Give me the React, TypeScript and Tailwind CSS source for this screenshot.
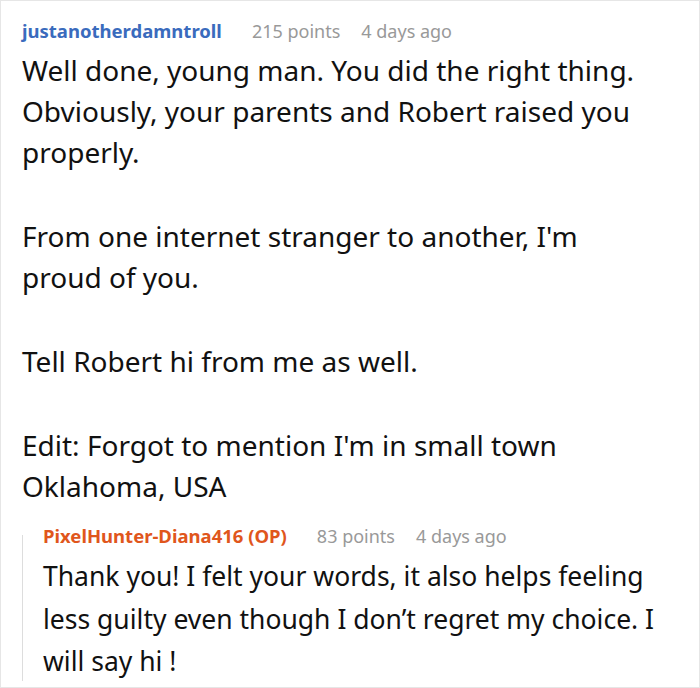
import React from "react"

const font = { fontFamily: '"Noto Sans", "Open Sans", sans-serif' }

const App = () => {
  return (
    <div className="w-[700px] h-[688px] bg-white border border-[#e6e6e6] overflow-hidden" style={font}>
      <div className="pl-[21px] pr-[40px] pt-[17px]">
        <div className="flex items-baseline text-[18px] leading-[26px]">
          <span className="font-bold text-[18.5px] text-[#3a6bbd]">justanotherdamntroll</span>
          <span className="ml-[30px] text-[#999]">215 points</span>
          <span className="ml-[21px] text-[#999]">4 days ago</span>
        </div>
        <div className="text-[28px] leading-[41px] text-[#111] mt-[6px]">
          <p>Well done, young man. You did the right thing. Obviously, your parents and Robert raised you properly.</p>
          <p className="mt-[43px]">From one internet stranger to another, I'm proud of you.</p>
          <p className="mt-[43px]">Tell Robert hi from me as well.</p>
          <p className="mt-[43px]">Edit: Forgot to mention I'm in small town Oklahoma, USA</p>
        </div>
      </div>
      <div className="relative ml-[21px] mt-[16px] pl-[21px] pr-[8px] before:absolute before:left-0 before:top-[12px] before:bottom-[2px] before:w-px before:bg-[#dddddd]">
        <div className="flex items-baseline text-[18px] leading-[26px]">
          <span className="font-bold text-[18.5px] text-[#e0561c]">PixelHunter-Diana416 (OP)</span>
          <span className="ml-[30px] text-[#999]">83 points</span>
          <span className="ml-[21px] text-[#999]">4 days ago</span>
        </div>
        <p className="text-[26.5px] leading-[42.5px] text-[#111] mt-[6px]">
          Thank you! I felt your words, it also helps feeling less guilty even though I don’t regret my choice. I will say hi !
        </p>
      </div>
    </div>
  )
}

export default App
